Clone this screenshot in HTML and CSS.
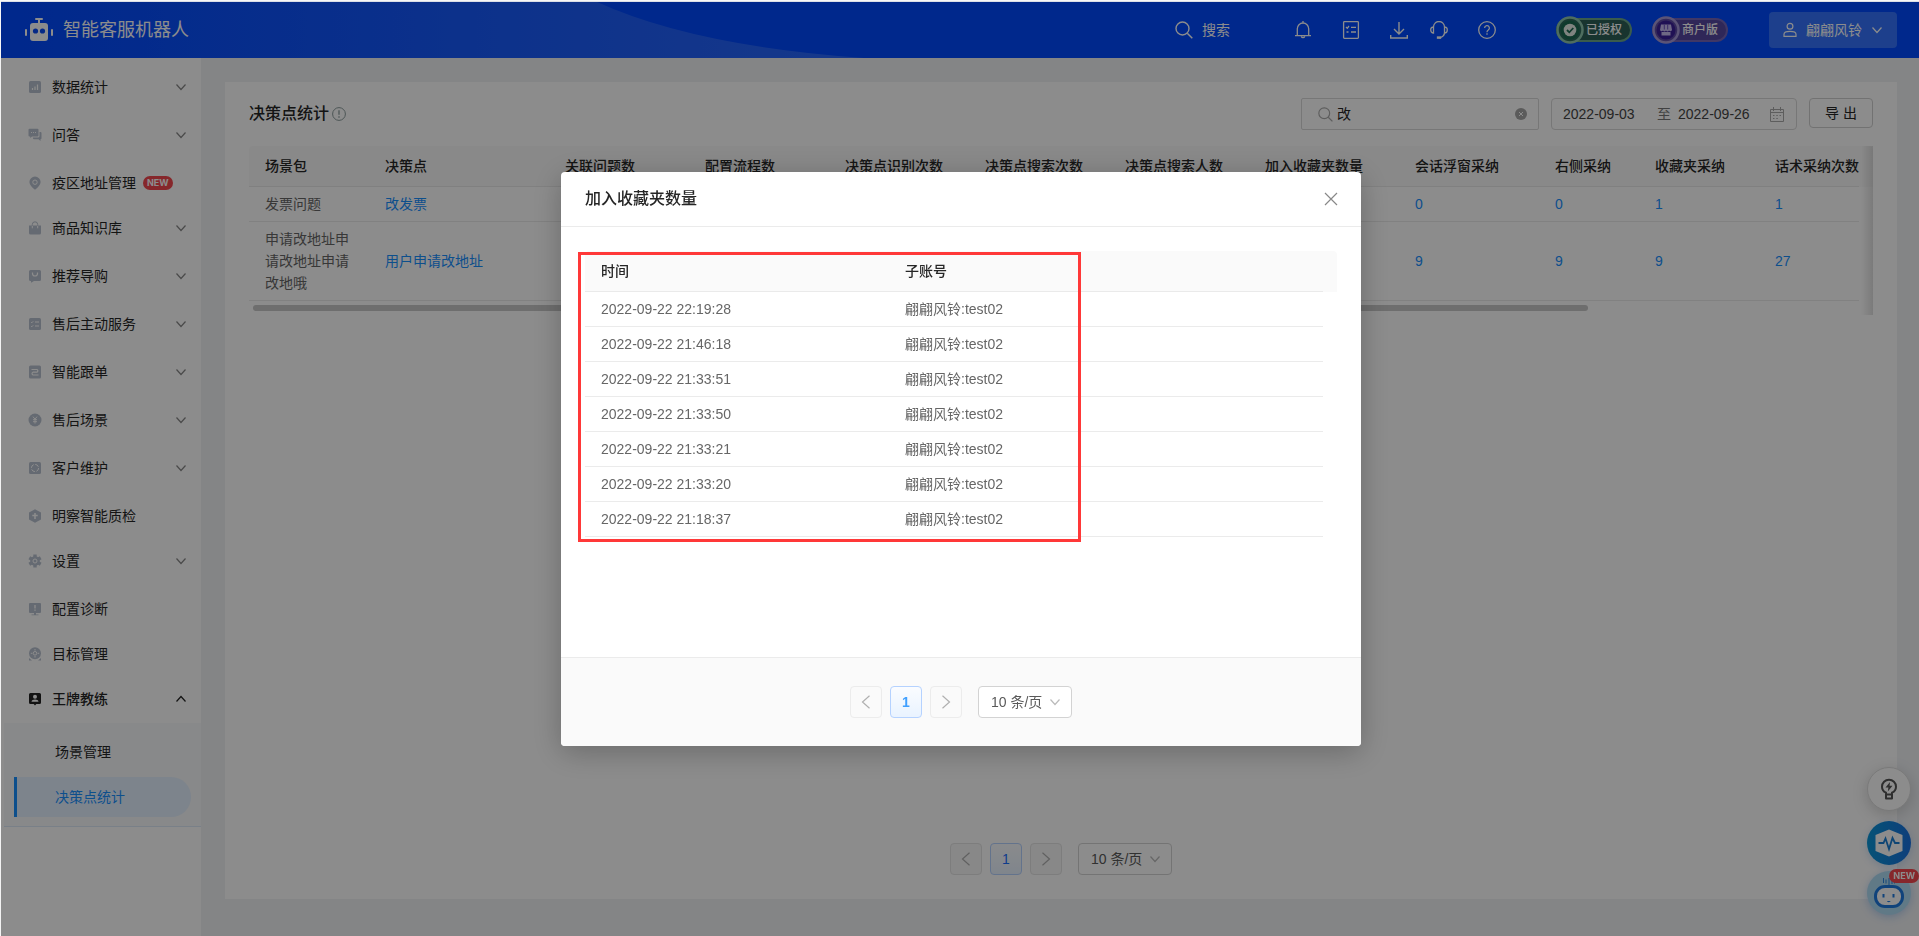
FILE: index.html
```html
<!DOCTYPE html>
<html lang="zh-CN">
<head>
<meta charset="utf-8">
<title>智能客服机器人</title>
<link rel="stylesheet" href="styles.css">
</head>
<body>
<svg class="defs" aria-hidden="true">
  <symbol id="down" viewBox="0 0 12 12"><path d="M1.5 3.500 6 8.500l4.500-5" fill="none" stroke="currentColor" stroke-width="1.200"/></symbol>
  <symbol id="left" viewBox="0 0 14 14"><path d="M10.500.8 3.500 7l7 6.200" fill="none" stroke="currentColor" stroke-width="1.200"/></symbol>
  <symbol id="right" viewBox="0 0 14 14"><path d="M3.500.8 10.500 7l-7 6.200" fill="none" stroke="currentColor" stroke-width="1.200"/></symbol>
  <symbol id="search" viewBox="0 0 18 18"><circle cx="7.500" cy="7.500" r="6.500" fill="none" stroke="currentColor" stroke-width="1.400"/><path d="m12.300 12.300 5 5" stroke="currentColor" stroke-width="1.500"/></symbol>
</svg>

<div class="app">
  <header class="topbar">
    <svg class="swoosh" viewBox="0 0 860 56" preserveAspectRatio="none" aria-hidden="true">
      <defs><linearGradient id="sw"><stop offset="0" stop-color="#0049ff"/><stop offset="1" stop-color="#2a68fd"/></linearGradient></defs>
      <path d="M0 0H594Q690 44 860 56H0Z" fill="url(#sw)"/>
    </svg>
    <a class="brand" href="#">
      <svg width="28" height="24" viewBox="0 0 28 24" aria-hidden="true"><g fill="#fff"><rect x="10" y="0" width="8" height="2" rx="1"/><rect x="13" y="1" width="2" height="5"/><rect x="5" y="5" width="18" height="18" rx="3"/><rect x="0" y="11" width="2" height="7" rx="1"/><rect x="26" y="11" width="2" height="7" rx="1"/></g><g fill="#0a4bf5"><circle cx="10.500" cy="13" r="2.600"/><circle cx="17.500" cy="13" r="2.600"/></g></svg>
      <span>智能客服机器人</span>
    </a>
    <div class="tools">
      <button class="find" type="button"><svg width="18" height="18"><use href="#search"/></svg>搜索</button>
      <div class="icons">
        <button type="button" aria-label="通知"><svg width="18" height="18" viewBox="0 0 18 18" fill="none" stroke="currentColor" stroke-width="1.300"><path d="M9 0v2M1 14.700h16M3.300 14.500V7.700a5.700 5.700 0 0 1 11.400 0v6.800M7.300 15.500a1.800 1.800 0 0 0 3.400 0"/></svg></button>
        <button type="button" aria-label="任务"><svg width="18" height="20" viewBox="0 0 18 20" fill="none" stroke="currentColor" stroke-width="1.300"><rect x="1.600" y="1.600" width="14.800" height="16.800" rx=".8"/><path d="m4 7 1.300 1.300L7 6M9 7.300h5M4.500 12h2M9 12h5"/></svg></button>
        <button type="button" aria-label="下载"><svg width="18" height="18" viewBox="0 0 18 18" fill="none" stroke="currentColor" stroke-width="1.400"><path d="M9 1v12M4 8l5 5 5-5M.7 14v3h16.600v-3"/></svg></button>
        <button class="near" type="button" aria-label="客服"><svg width="18" height="18" viewBox="0 0 18 18" fill="none" stroke="currentColor" stroke-width="1.300"><path d="M3.500 6a5.500 5.500 0 0 1 11 0v5.500c0 3-2 4.500-5 5.300M3.500 6v6C-.2 12-.2 6 3.500 6ZM14.500 6v6c3.700 0 3.700-6 0-6Z"/><rect x="7.500" y="16" width="3" height="1.200"/></svg></button>
        <button type="button" aria-label="帮助"><svg width="18" height="18" viewBox="0 0 18 18" fill="none" stroke="currentColor" stroke-width="1.300"><circle cx="9" cy="9" r="8.300"/><path d="M6.600 7a2.400 2.400 0 1 1 3.500 2.200c-.9.500-1.100.8-1.100 2M9 12.300v1.400"/></svg></button>
      </div>
      <div class="badges">
        <span class="badge badge-green"><svg width="28" height="28" viewBox="0 0 28 28" aria-hidden="true"><circle cx="14" cy="14" r="12.500" fill="#2f6b5c" stroke="#8fc7ad" stroke-width="2.500"/><circle cx="14" cy="14" r="9.500" fill="#1d6a51"/><circle cx="14" cy="14" r="6.300" fill="#e8f0ea"/><path d="m11 14 2.300 2.300 4-4.300" fill="none" stroke="#1d6a51" stroke-width="1.800"/></svg>已授权</span>
        <span class="badge badge-purple"><svg width="28" height="28" viewBox="0 0 28 28" aria-hidden="true"><circle cx="14" cy="14" r="12.500" fill="#5f4da6" stroke="#a79ad8" stroke-width="2.500"/><circle cx="14" cy="14" r="9.500" fill="#3b1f9a"/><path d="M9 8.500h10l1 5.500a1.700 1.700 0 0 1-3 .5 1.700 1.700 0 0 1-3 0 1.700 1.700 0 0 1-3 0 1.700 1.700 0 0 1-3-.5ZM9.500 16h9v3.500h-9Z" fill="#c9bdf0"/><path d="M12.300 8.500v5M15.700 8.500v5" stroke="#6a52bd"/></svg>商户版</span>
      </div>
      <button class="user" type="button"><svg width="14" height="16" viewBox="0 0 14 16" fill="none" stroke="currentColor" stroke-width="1.200"><circle cx="7" cy="4.200" r="2.900"/><path d="M1 14.300v-2C1 8.500 13 8.500 13 12.300v2Z"/></svg><span>翩翩风铃</span><svg width="12" height="12"><use href="#down"/></svg></button>
    </div>
  </header>

  <div class="main">
    <nav class="side">
      <a class="item sub" href="#"><svg class="mi" viewBox="0 0 14 14"><rect x="1" y="1" width="12" height="12" rx="1.500" fill="currentColor"/><path d="M4.500 10V8M7 10V6.500M9.500 10V4.500" stroke="#fff" stroke-width="1.200"/></svg><span>数据统计</span><svg class="chev"><use href="#down"/></svg></a>
      <a class="item sub" href="#"><svg class="mi" viewBox="0 0 14 14"><path d="M1.500.8h8a1 1 0 0 1 1 1v5.700a1 1 0 0 1-1 1H4L2.200 10V8.500h-.7a1 1 0 0 1-1-1V1.800a1 1 0 0 1 1-1ZM11.500 4h1a1 1 0 0 1 1 1v5.200a1 1 0 0 1-1 1V13l-2-1.800H6a1 1 0 0 1-1-1v-.7h5a1.500 1.500 0 0 0 1.500-1.500Z" fill="currentColor"/><path d="M3 4.500h1M5 4.500h1M7 4.500h1" stroke="#fff"/></svg><span>问答</span><svg class="chev"><use href="#down"/></svg></a>
      <a class="item" href="#"><svg class="mi" viewBox="0 0 14 14"><path d="M7 .5a5.600 5.600 0 0 1 5.600 5.600C12.600 9 10 11.500 7 13.800 4 11.500 1.400 9 1.400 6.100A5.600 5.600 0 0 1 7 .5Z" fill="currentColor"/><circle cx="7" cy="6.200" r="2.200" fill="none" stroke="#fff"/></svg><span>疫区地址管理</span><em class="new">NEW</em></a>
      <a class="item sub" href="#"><svg class="mi" viewBox="0 0 14 14"><path d="M1 4.500h12V12a1.500 1.500 0 0 1-1.500 1.500h-9A1.500 1.500 0 0 1 1 12Z" fill="currentColor"/><path d="M4.300 6.500V3.500a2.700 2.700 0 0 1 5.400 0v3" fill="none" stroke="currentColor"/><path d="M4.300 4.800v2.500M9.700 4.800v2.500" stroke="#fff"/></svg><span>商品知识库</span><svg class="chev"><use href="#down"/></svg></a>
      <a class="item sub" href="#"><svg class="mi" viewBox="0 0 14 14"><path d="M2.500 1h9A1.500 1.500 0 0 1 13 2.500v8a1.500 1.500 0 0 1-1.500 1.500H6l-3 1.800V12a1.500 1.500 0 0 1-2-1.500v-8A1.500 1.500 0 0 1 2.500 1Z" fill="currentColor"/><path d="M4.500 3.500v1a2.500 2.500 0 0 0 5 0v-1" fill="none" stroke="#fff" stroke-width="1.200"/></svg><span>推荐导购</span><svg class="chev"><use href="#down"/></svg></a>
      <a class="item sub" href="#"><svg class="mi" viewBox="0 0 14 14"><rect x="1" y="1" width="12" height="12" rx="1.500" fill="currentColor"/><path d="m3 5 .8.8L5.200 4.300M7 5h4M3 9l.8.800 1.400-1.500M7 9h4" fill="none" stroke="#fff"/></svg><span>售后主动服务</span><svg class="chev"><use href="#down"/></svg></a>
      <a class="item sub" href="#"><svg class="mi" viewBox="0 0 14 14"><rect x="1" y=".5" width="12" height="13" rx="1.500" fill="currentColor"/><path d="M3.500 4.500h5.500a1.500 1.500 0 0 1 0 2.700H5A1.500 1.500 0 0 0 5 10h5.500" fill="none" stroke="#fff" stroke-width="1.200"/></svg><span>智能跟单</span><svg class="chev"><use href="#down"/></svg></a>
      <a class="item sub" href="#"><svg class="mi" viewBox="0 0 14 14"><circle cx="7" cy="7" r="6.500" fill="currentColor"/><path d="m5 3.700 2 2.500 2-2.500M7 6v4.500M5 6.700h4M5 8.700h4" fill="none" stroke="#fff"/></svg><span>售后场景</span><svg class="chev"><use href="#down"/></svg></a>
      <a class="item sub" href="#"><svg class="mi" viewBox="0 0 14 14"><rect x="1" y="1" width="12" height="12" rx="1.500" fill="currentColor"/><circle cx="7" cy="7" r="3.600" fill="none" stroke="#fff" stroke-dasharray="4 1.600"/></svg><span>客户维护</span><svg class="chev"><use href="#down"/></svg></a>
      <a class="item" href="#"><svg class="mi" viewBox="0 0 14 14"><path d="m7 .3 6 3.300v6.800l-6 3.300-6-3.300V3.600Z" fill="currentColor"/><path d="M7 4v6M4.300 6.500h5.400" stroke="#fff" stroke-width="1.500"/></svg><span>明察智能质检</span></a>
      <a class="item sub" href="#"><svg class="mi" viewBox="0 0 14 14"><circle cx="7" cy="7" r="4.800" fill="currentColor"/><path d="M7 .4v13.200M1.300 3.700l11.400 6.600M12.700 3.700 1.300 10.300" stroke="currentColor" stroke-width="3.400"/><circle cx="7" cy="7" r="2" fill="none" stroke="#fff"/></svg><span>设置</span><svg class="chev"><use href="#down"/></svg></a>
      <a class="item" href="#"><svg class="mi" viewBox="0 0 14 14"><path d="M2 1h10a1 1 0 0 1 1 1v8a1 1 0 0 1-1 1H8v1.500h2.500v.8h-7v-.8H6V11H2a1 1 0 0 1-1-1V2a1 1 0 0 1 1-1Z" fill="currentColor"/><path d="M7 3v3.500M7 7.500v1.300" stroke="#fff" stroke-width="1.300"/></svg><span>配置诊断</span></a>
      <a class="item" href="#"><svg class="mi" viewBox="0 0 14 14"><circle cx="7" cy="6.300" r="6" fill="currentColor"/><path d="M1 13.500V11l3 2.500ZM13 13.500V11l-3 2.500Z" fill="currentColor"/><circle cx="7" cy="6.300" r="1.800" fill="none" stroke="#fff"/><path d="M7 2v1.500M7 9v1.500M2.800 6.300h1.500M9.700 6.300h1.500" stroke="#fff"/></svg><span>目标管理</span></a>
      <a class="item open" href="#"><svg class="mi" viewBox="0 0 14 14"><path d="M2.500 1h9A1.500 1.500 0 0 1 13 2.500v8a1.500 1.500 0 0 1-1.500 1.500H8.300L7 13.500 5.700 12H2.500A1.500 1.500 0 0 1 1 10.500v-8A1.500 1.500 0 0 1 2.500 1Z" fill="currentColor"/><circle cx="7" cy="4.700" r="2" fill="#fff"/><path d="M3.500 9.800c0-3 7-3 7 0Z" fill="#fff"/></svg><span>王牌教练</span><svg class="chev"><use href="#down"/></svg></a>
      <div class="submenu">
        <a href="#">场景管理</a>
        <a class="current" href="#">决策点统计</a>
      </div>
    </nav>

    <section class="content">
      <div class="card">
        <div class="card-head">
          <h1>决策点统计</h1>
          <svg class="info" width="14" height="14" viewBox="0 0 14 14" fill="none" stroke="currentColor" aria-hidden="true"><circle cx="7" cy="7" r="6.400"/><path d="M7 3.300v4.500M7 9.200v1.500" stroke-width="1.300"/></svg>
          <div class="filters">
            <label class="field query"><svg width="15" height="15"><use href="#search"/></svg><input type="text" value="改" aria-label="搜索决策点"><button type="button" aria-label="清除"><svg width="12" height="12" viewBox="0 0 12 12"><circle cx="6" cy="6" r="6" fill="currentColor"/><path d="m4 4 4 4M8 4 4 8" stroke="#fff"/></svg></button></label>
            <div class="field range"><input type="text" value="2022-09-03" aria-label="开始日期"><span>至</span><input type="text" value="2022-09-26" aria-label="结束日期"><svg width="14" height="15" viewBox="0 0 14 15" fill="none" stroke="currentColor" aria-hidden="true"><path d="M.5 2.500h13v12H.5ZM.5 5.500h13M3.500 0v4M10.500 0v4M3 8.500h1.500M6.300 8.500h1.500M9.500 8.500H11M3 11.500h1.500M6.300 11.500h1.500"/></svg></div>
            <button class="export" type="button">导 出</button>
          </div>
        </div>
        <div class="grid-wrap">
          <table class="grid">
            <colgroup><col style="width:120px"><col style="width:180px"><col style="width:140px"><col style="width:140px"><col style="width:140px"><col style="width:140px"><col style="width:140px"><col style="width:150px"><col style="width:140px"><col style="width:100px"><col style="width:120px"><col></colgroup>
            <thead><tr><th>场景包</th><th>决策点</th><th>关联问题数</th><th>配置流程数</th><th>决策点识别次数</th><th>决策点搜索次数</th><th>决策点搜索人数</th><th>加入收藏夹数量</th><th>会话浮窗采纳</th><th>右侧采纳</th><th>收藏夹采纳</th><th>话术采纳次数</th></tr></thead>
            <tbody>
              <tr><td>发票问题</td><td><a href="#">改发票</a></td><td></td><td></td><td></td><td></td><td></td><td></td><td><a href="#">0</a></td><td><a href="#">0</a></td><td><a href="#">1</a></td><td><a href="#">1</a></td></tr>
              <tr><td>申请改地址申请改地址申请改地哦</td><td><a href="#">用户申请改地址</a></td><td></td><td></td><td></td><td></td><td></td><td></td><td><a href="#">9</a></td><td><a href="#">9</a></td><td><a href="#">9</a></td><td><a href="#">27</a></td></tr>
            </tbody>
          </table>
          <div class="track"><div class="thumb"></div></div>
        </div>
        <div class="pager">
          <button type="button" disabled aria-label="上一页"><svg width="14" height="14"><use href="#left"/></svg></button>
          <button class="on" type="button">1</button>
          <button type="button" disabled aria-label="下一页"><svg width="14" height="14"><use href="#right"/></svg></button>
          <div class="size"><select aria-label="每页条数"><option>10 条/页</option></select><svg width="12" height="12" aria-hidden="true"><use href="#down"/></svg></div>
        </div>
      </div>
    </section>
  </div>

  <aside class="floats">
    <button class="fab lamp" type="button" aria-label="灵感"><svg width="18" height="22" viewBox="0 0 18 22" fill="none" stroke="#555" stroke-width="2"><path d="M6 16.500v-1.800C3.500 13.500 2 11.500 2 8.700a7 7 0 0 1 14 0c0 2.800-1.500 4.800-4 6v1.800ZM6 16.500v4h6v-4" stroke-linejoin="round"/><path d="M10 4 5.500 9.500h2.900L7.800 13.500l4.700-5.700H9.600Z" fill="#555" stroke="none"/></svg></button>
    <button class="fab pulse" type="button" aria-label="诊断"><svg width="28" height="28" viewBox="0 0 28 28"><path d="M14 .5 27.500 6v16L14 27.500.5 22V6Z" fill="#fff"/><path d="M3.500 14h5l2-4.500 3.500 10.500L17.500 9l2.500 5h4.500" fill="none" stroke="#1a7fd4" stroke-width="1.800"/></svg></button>
    <button class="fab bot" type="button" aria-label="助手"><svg width="30" height="32" viewBox="0 0 30 32"><path d="M9.500 1v5M12 2.500v4M15 1v8M18 3.500V7M20.500 5v1.500" stroke="#2b86e0"/><rect x="1.500" y="9.500" width="27" height="20" rx="9.500" fill="#fff" stroke="#1e7be0" stroke-width="3"/><path d="M9.500 17v3.500M19.500 17v3.500" stroke="#1e7be0" stroke-width="2"/><path d="M13 24c0 1.500 3.500 1.500 3.500 0Z" fill="#1e7be0"/></svg><em class="new">NEW</em></button>
  </aside>
</div>

<div class="mask">
  <div class="modal" role="dialog" aria-modal="true" aria-labelledby="dlg-title">
    <div class="modal-head">
      <h2 id="dlg-title">加入收藏夹数量</h2>
      <button type="button" aria-label="关闭"><svg width="14" height="14" viewBox="0 0 14 14"><path d="m1 1 12 12M13 1 1 13" stroke="currentColor" stroke-width="1.200"/></svg></button>
    </div>
    <div class="modal-body">
      <table class="grid detail">
        <colgroup><col style="width:304px"><col></colgroup>
        <thead><tr><th>时间</th><th>子账号</th></tr></thead>
        <tbody>
          <tr><td>2022-09-22 22:19:28</td><td>翩翩风铃:test02</td></tr>
          <tr><td>2022-09-22 21:46:18</td><td>翩翩风铃:test02</td></tr>
          <tr><td>2022-09-22 21:33:51</td><td>翩翩风铃:test02</td></tr>
          <tr><td>2022-09-22 21:33:50</td><td>翩翩风铃:test02</td></tr>
          <tr><td>2022-09-22 21:33:21</td><td>翩翩风铃:test02</td></tr>
          <tr><td>2022-09-22 21:33:20</td><td>翩翩风铃:test02</td></tr>
          <tr><td>2022-09-22 21:18:37</td><td>翩翩风铃:test02</td></tr>
        </tbody>
      </table>
      <div class="highlight"></div>
    </div>
    <div class="modal-foot">
      <div class="pager">
        <button type="button" disabled aria-label="上一页"><svg width="14" height="14"><use href="#left"/></svg></button>
        <button class="on strong" type="button">1</button>
        <button type="button" disabled aria-label="下一页"><svg width="14" height="14"><use href="#right"/></svg></button>
        <div class="size"><select aria-label="每页条数"><option>10 条/页</option></select><svg width="12" height="12" aria-hidden="true"><use href="#down"/></svg></div>
      </div>
    </div>
  </div>
</div>
</body>
</html>
```
FILE: styles.css
```css
* { box-sizing: border-box; }

body {
  margin: 0;
  padding: 1px 0 0 1px;
  height: 100vh;
  overflow: hidden;
  background: #f7f7f7;
  color: #262626;
  font: 14px/22px "Liberation Sans", "Noto Sans CJK SC", sans-serif;
}

a { color: inherit; text-decoration: none; }
h1, h2 { margin: 0; font-size: 16px; line-height: 24px; font-weight: 500; }
em { font-style: normal; }
svg { display: block; flex: none; }
button, input, select { font: inherit; color: inherit; margin: 0; padding: 0; border: 0; background: none; outline: 0; }
button { display: flex; align-items: center; justify-content: center; }
.defs { position: absolute; width: 0; height: 0; }

.app {
  display: flex;
  flex-direction: column;
  height: 100%;
  border-top: 1px solid #dcdfe6;
}

/* top bar */
.topbar {
  position: relative;
  display: flex;
  align-items: center;
  justify-content: space-between;
  flex: none;
  height: 56px;
  padding: 0 22px 0 24px;
  background: #0049ff;
  color: #fff;
}
.swoosh { position: absolute; left: 0; top: 0; width: 45%; height: 56px; }
.brand { position: relative; display: flex; align-items: center; gap: 10px; font-size: 18px; line-height: 28px; }
.tools, .icons, .badges { display: flex; align-items: center; }
.find { gap: 9px; margin-right: 64px; }
.icons { gap: 30px; margin-right: 60px; }
.icons .near { margin-left: -8px; }
.badges { gap: 20px; margin-right: 41px; }
.badge {
  display: flex;
  align-items: center;
  gap: 2px;
  width: 76px;
  height: 24px;
  border: 2px solid #6aa78a;
  border-left: 0;
  border-radius: 12px;
  background: #2c5f57;
  font-size: 12px;
  font-weight: 500;
  line-height: 20px;
}
.badge-purple { border-color: #7565b8; background: #5747a0; }
.user {
  gap: 9px;
  width: 128px;
  height: 36px;
  border-radius: 4px;
  background: #3574ff;
}

/* side menu */
.main { display: flex; flex: 1; min-height: 0; }
.side {
  flex: none;
  width: 200px;
  padding-top: 9px;
  background: #fff;
  box-shadow: 2px 0 6px rgba(0, 21, 41, .08);
}
.item {
  display: flex;
  align-items: center;
  height: 40px;
  margin-bottom: 5px;
  padding: 0 14px 0 27px;
}
.item.sub { margin-bottom: 8px; }
.item.open { margin-bottom: 4px; font-weight: 500; }
.mi { width: 14px; height: 14px; margin-right: 10px; color: #b9c2d0; }
.open .mi { color: #222; }
.chev { width: 12px; height: 12px; margin-left: auto; color: #888; }
.open .chev { color: #222; transform: rotate(180deg); }
.new {
  height: 14px;
  margin-left: 7px;
  padding: 0 4px;
  border-radius: 7px;
  background: #f5484f;
  color: #fff;
  font: 700 9px/14px Inter, sans-serif;
}
.submenu {
  display: flex;
  flex-direction: column;
  gap: 5px;
  margin-left: 3px;
  padding: 9px 10px;
  border-bottom: 1px solid #dce9f8;
  background: #f7f9fc;
}
.submenu a { padding: 9px 0 9px 38px; border-left: 3px solid transparent; }
.submenu .current {
  border-color: #1890ff;
  border-radius: 0 20px 20px 0;
  background: #e3f0ff;
  color: #1890ff;
}

/* statistics card */
.content { display: flex; flex: 1; min-width: 0; padding: 24px 22px 37px 24px; background: #f0f2f5; }
.card { display: flex; flex-direction: column; flex: 1; min-width: 0; padding: 16px 24px 24px; background: #fff; }
.card-head { display: flex; align-items: center; height: 32px; margin-bottom: 16px; }
.info { margin-left: 3px; color: #8c9c9c; }
.filters { display: flex; gap: 12px; margin-left: auto; }
.field { display: flex; align-items: center; height: 32px; border: 1px solid #d9d9d9; border-radius: 2px; }
.field svg { color: #aaa; }
.query { width: 238px; padding: 0 11px 0 16px; }
.query input { flex: 1; min-width: 0; margin-left: 4px; }
.query button svg { color: #a6a6a6; }
.range { width: 246px; padding: 0 12px 0 11px; border-radius: 4px; }
.range input { width: 76px; color: #444; }
.range span { margin: 0 7px 0 18px; color: #777; }
.range > svg { margin-left: auto; }
.export { width: 64px; height: 30px; border: 1px solid #d0d0d0; border-radius: 4px; }

.grid { width: calc(100% - 14px); table-layout: fixed; border-collapse: separate; border-spacing: 0; }
.grid th {
  padding: 9px 0 9px 16px;
  border-bottom: 1px solid #eaeaea;
  background: #fafafa;
  font-weight: 500;
  text-align: left;
  white-space: nowrap;
}
.grid td { padding: 6px 16px; border-bottom: 1px solid #ebebeb; color: #666; }
.grid th:first-child { border-top-left-radius: 4px; }
.grid th:last-child { box-shadow: 14px 0 #fafafa; border-top-right-radius: 4px; }
.grid a { color: #1890ff; }
.grid-wrap { position: relative; padding-bottom: 4px; }
.grid-wrap::after {
  content: "";
  position: absolute;
  inset: 0 0 0 auto;
  width: 12px;
  background: linear-gradient(90deg, transparent, rgba(0, 0, 0, .12));
}
.track { padding: 4px 285px 0 4px; }
.thumb { height: 6px; border-radius: 3px; background: #c8c8c8; }

/* pagination */
.pager { display: flex; justify-content: center; gap: 8px; margin-top: auto; }
.pager button { width: 32px; height: 32px; border: 1px solid #ececec; border-radius: 4px; background: #fafafa; color: #b0b0b0; }
.card .pager button { background: #f7f7f7; border-color: #e4e4e4; }
.pager .on, .card .pager .on { border-color: #b5d2ff; background: linear-gradient(#fafcff, #e9f3ff); color: #1a6fff; }
.pager .strong { color: #40a0ff; font-weight: 700; }
.size { position: relative; width: 94px; height: 32px; margin-left: 8px; }
.size select {
  appearance: none;
  width: 100%;
  height: 100%;
  padding-left: 12px;
  border: 1px solid #d3d3d3;
  border-radius: 4px;
  background: #fff;
  color: #595959;
}
.size svg { position: absolute; right: 11px; top: 10px; color: #bbb; }

/* floating buttons */
.floats { position: fixed; right: 8px; bottom: 21px; display: flex; flex-direction: column; gap: 6px; }
.fab { position: relative; width: 44px; height: 44px; border-radius: 50%; }
.lamp { margin-bottom: 4px; border: 1px solid #ddd; background: #fff; box-shadow: 0 4px 16px rgba(0, 0, 0, .18); }
.pulse { background: linear-gradient(90deg, #0a96d8, #1a72e0); box-shadow: 0 2px 8px rgba(0, 100, 220, .2); }
.bot { background: #b0dcf5; box-shadow: 0 2px 8px rgba(0, 100, 220, .25); }
.fab .new { position: absolute; top: -2px; right: -8px; }

/* dialog */
.mask {
  position: fixed;
  inset: 2px 0 0 1px;
  display: flex;
  justify-content: center;
  align-items: flex-start;
  padding: 170px 0 0 2px;
  background: rgba(0, 0, 0, .45);
}
.modal {
  width: 800px;
  border-radius: 4px;
  overflow: hidden;
  background: #fff;
  box-shadow: 0 6px 30px rgba(0, 0, 0, .25);
}
.modal-head {
  display: flex;
  align-items: center;
  justify-content: space-between;
  padding: 15px 23px 15px 24px;
  border-bottom: 1px solid #ebebeb;
}
.modal-head button { color: #888; }
.modal-body { position: relative; height: 430px; padding: 24px; }
.highlight {
  position: absolute;
  left: 17px;
  top: 25px;
  width: 503px;
  height: 290px;
  border: 3px solid #ff3838;
}
.modal-foot { padding: 28px 0; border-top: 1px solid #ebebeb; background: #fafafa; }
```
